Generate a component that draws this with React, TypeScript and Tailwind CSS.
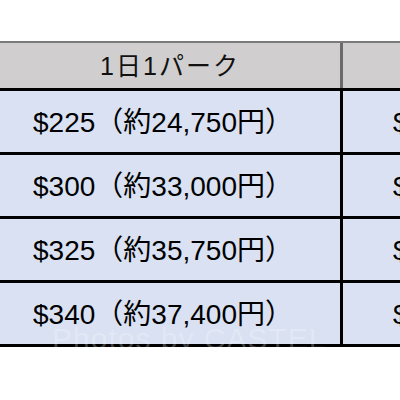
import React from 'react';

const rows = [
  { left: '$225（約24,750円）', right: '$' },
  { left: '$300（約33,000円）', right: '$' },
  { left: '$325（約35,750円）', right: '$' },
  { left: '$340（約37,400円）', right: '$' },
];

const font = { fontFamily: '"Liberation Sans", "Noto Sans CJK JP", sans-serif' };

export default function App() {
  return (
    <div className="w-[400px] h-[400px] bg-white overflow-hidden relative pt-[41px]" style={font}>
      {/* header */}
      <div className="flex h-[47px] border-t-2 border-[#7a7a7a] bg-[#d0cece]">
        <div className="w-[340px] shrink-0 flex items-center justify-center text-[25px] tracking-[2px] text-[#111] pt-[2px]">
          1日1パーク
        </div>
        <div className="w-[3px] bg-[#6b6b6b] shrink-0" />
        <div className="flex-1" />
      </div>

      {rows.map((r, i) => (
        <div key={i} className="flex h-[64px] border-t-[3px] border-black bg-[#d9e1f2]">
          <div className="w-[340px] shrink-0 flex items-center justify-center text-[28px] text-black pr-[14px] pt-[2px] whitespace-nowrap">
            {r.left}
          </div>
          <div className="w-[3px] bg-black shrink-0" />
          <div className="flex-1 flex items-center pl-[50px] text-[28px] text-black pt-[2px] whitespace-nowrap overflow-hidden">
            {r.right}
          </div>
        </div>
      ))}
      <div className="h-[3px] bg-black" />

      {/* watermark */}
      <div className="absolute left-[52px] top-[316px] text-[30px] text-white/25 whitespace-nowrap tracking-[1px]">
        Photos by CASTEL
      </div>
    </div>
  );
}
